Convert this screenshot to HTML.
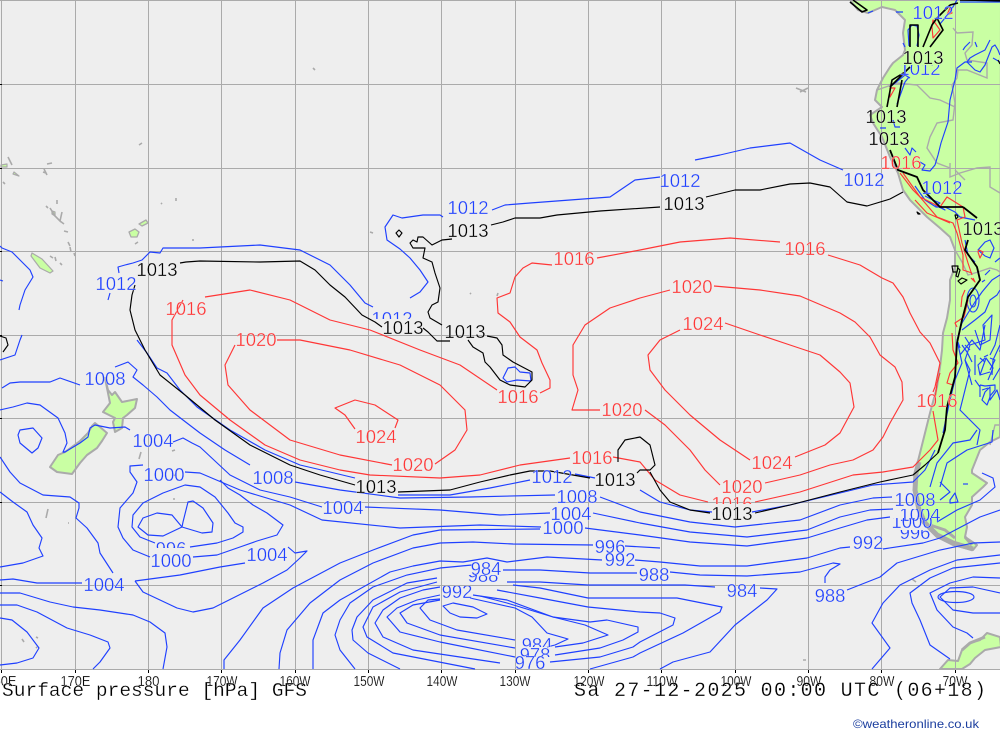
<!DOCTYPE html>
<html><head><meta charset="utf-8"><title>Surface pressure</title>
<style>
html,body{margin:0;padding:0;background:#fff;width:1000px;height:733px;overflow:hidden}
svg{display:block}
text{font-family:"Liberation Sans",sans-serif}
.l text{font-size:18.5px;text-anchor:middle;stroke:#eeeeee;stroke-width:.3;paint-order:normal}
.b polyline,.b path{stroke:#1f40ff}
.r polyline,.r path{stroke:#ff3636}
.k polyline,.k path{stroke:#000}
.c polyline,.c path{fill:none;stroke-width:1.15;stroke-linejoin:round}
.a text{font-size:15px;text-anchor:middle;fill:#000;stroke:#fff;stroke-width:.2}
</style></head><body>
<svg width="1000" height="733" viewBox="0 0 1000 733" xmlns="http://www.w3.org/2000/svg">
<defs>
<clipPath id="c1"><rect x="370" y="300" width="50" height="19"/></clipPath>
<clipPath id="c2"><rect x="700" y="490" width="70" height="14"/></clipPath>
<clipPath id="c3"><rect x="150" y="535" width="45" height="13"/></clipPath>
<clipPath id="c4"><rect x="895" y="509" width="50" height="13"/></clipPath>
<clipPath id="c5"><rect x="885" y="518" width="50" height="11"/></clipPath>
<clipPath id="c6"><rect x="890" y="530" width="50" height="11"/></clipPath>
<clipPath id="c7"><rect x="895" y="65" width="50" height="12"/></clipPath>
<clipPath id="c8"><rect x="510" y="630" width="60" height="17"/></clipPath>
<clipPath id="c9"><rect x="510" y="648" width="60" height="9"/></clipPath>
<clipPath id="c10"><rect x="460" y="575" width="50" height="8"/></clipPath>
<clipPath id="c11"><rect x="430" y="586" width="60" height="14"/></clipPath>
</defs>
<rect x="0" y="0" width="1000" height="669" fill="#eeeeee"/>

<!-- land -->
<g fill="#c9ffa3" stroke="#aaaaaa" stroke-width="2" stroke-linejoin="round">
<path d="M850 0L858 10 868 13 882 7 895 10 902 17 905 20 903 33 905 50 903 55 893 63 890 67 883 78 877 90 875 100 882 107 870 115 873 123 882 137 890 157 898 173 903 190 910 200 927 217 940 228 950 237 955 250 955 267 950 280 950 300 947 318 943 333 942 350 940 367 937 387 930 413 925 433 920 453 915 473 915 490 918 510 923 523 937 537 953 545 973 550 977 545 965 537 967 527 965 517 972 505 972 497 983 487 987 483 972 473 972 470 980 450 990 442 1000 437 1001 0Z"/>
<path d="M940 669L948 660 958 661 962 650 970 643 980 640 987 633 1000 637 1001 647 985 650 975 658 970 664 962 669Z"/>
<path d="M105 378L108 390 112 395 115 392 122 402 137 399 135 408 127 415 123 418 122 428 115 432 113 422 115 418 103 412 110 403 108 393Z"/>
<path d="M95 423L92 426 88 433 80 441 65 452 58 455 50 467 57 472 72 474 80 463 87 455 97 448 102 441 107 433 100 427Z"/>
<path d="M32 253L42 259 53 271 50 273 40 268 31 256Z" stroke-width="1.2"/>
<path d="M129 232L135 229 139 232 137 237 131 237Z" stroke-width="1.3"/>
<path d="M139 224L146 220 148 223 142 226Z" stroke-width="1.3"/>
<path d="M52 211L55 212 55 216 52 214Z" stroke-width="1.2"/>
<path d="M1 165L7 164 7 167 1 167Z" stroke-width="1.2"/>
<path d="M14 172L19 176 13 174Z" stroke-width="1.2"/>
</g>
<!-- small specks -->
<g fill="none" stroke="#aaaaaa" stroke-width="1.6">
<path d="M8 157L12 165M44 169L47 175M46 206L48 208M57 200L57 204M50 208L55 216 60 221 62 212M60 221L64 224M68 232L64 231M68 242L70 246M70 247L71 252M74 253L75 256M50 256L53 258M55 257L56 261M60 263L62 265M135 244L138 242M46 173L43 172M3 182L5 184M52 163L47 164M142 143L139 145M161 203L162 204M176 198L176 201M193 239L193 241M313 68L315 70M796 88L806 92M800 92L808 88M912 579L916 582M803 660L806 660M174 475L176 476M46 518L48 509M68 523L69 523M36 637L38 638M22 639L24 642M36 647L37 648M139 459L141 452 M173 499L175 499M470 293L471 294M498 293L497 296M373 233L370 232M175 450L172 451"/>
</g>
<!-- heavy southern coast -->
<g fill="none" stroke="#aaaaaa" stroke-linejoin="round">
<path d="M919 462L916 473 915 490 919 510 925 523 937 535 953 543 973 549" stroke-width="5"/>
<path d="M930 525L945 530 955 538M965 537L972 545" stroke-width="3"/>
<path d="M962 650L970 643 985 637" stroke-width="3"/>
</g>
<!-- borders -->
<g fill="none" stroke="#aaaaaa" stroke-width="1.4">
<path d="M953 28L957 33 973 32 972 45 965 53 967 60 987 63 987 78 967 70 958 70 957 78 952 85 955 103 953 120 937 123 930 137 927 148 937 163 950 168M950 163L950 177 960 173 977 168 990 167 990 187 1000 193"/>
<path d="M877 90L897 83 917 85 930 98 940 100 955 107"/>
<path d="M955 250L962 262 968 275 978 272 990 268 997 270 1000 272"/>
<path d="M990 445L995 425 1000 425M955 170L965 180"/>
</g>

<!-- grid -->
<g stroke="#aaaaaa" stroke-width="1" fill="none">
<path d="M0 .5H1000M0 84.5H1000M0 168.5H1000M0 251.5H1000M0 335.5H1000M0 418.5H1000M0 502.5H1000M0 585.5H1000M0 669.5H1000"/>
<path d="M1.5 0V669M75.5 0V669M148.5 0V669M221.5 0V669M295.5 0V669M368.5 0V669M441.5 0V669M515.5 0V669M588.5 0V669M661.5 0V669M735.5 0V669M808.5 0V669M881.5 0V669M955.5 0V669"/>
</g>
<g stroke="#000" stroke-width="1" fill="none">
<path d="M1.5 670V673M75.5 670V673M148.5 670V673M221.5 670V673M295.5 670V673M368.5 670V673M441.5 670V673M515.5 670V673M588.5 670V673M661.5 670V673M735.5 670V673M808.5 670V673M881.5 670V673M955.5 670V673M0 84.5H2M0 168.5H2M0 251.5H2M0 335.5H2M0 418.5H2M0 502.5H2M0 585.5H2"/>
</g>

<!-- blue contours -->
<g class="c b">
<path d="M119 273L118 267 125 265 133 263 142 260 150 252 160 253 163 248 200 248 260 245 300 250 330 265 350 285 365 303 373 307"/>
<path d="M410 298L420 292 428 282 420 270 410 258 400 249 387 240 385 227 393 215 402 218 423 215 440 215 443 217"/>
<path d="M492 210L505 205 530 203 570 200 610 197 635 180 660 177"/>
<path d="M695 160L720 155 750 148 790 143 820 160 843 170"/>
<path d="M110 293L108 300"/>
<path d="M137 340L147 353 157 368 167 373 180 390 197 407 230 430 265 450 300 465 330 472 355 478"/>
<path d="M398 495L450 495 490 488 530 480"/>
<path d="M575 474L595 478"/>
<path d="M640 490L660 502 690 510 712 512M752 512L790 505 840 493 873 485 913 482 925 470 935 450"/>
<path d="M2 388L10 383 20 382 33 382 50 382 60 378 80 385"/>
<path d="M115 367L128 362 137 370 133 377 143 385 157 397 170 410 183 420 200 433 225 450 250 465"/>
<path d="M295 482L340 490 400 498 470 497 555 495"/>
<path d="M600 497L640 512 690 522 735 527 800 520 840 505 873 498 892 497"/>
<path d="M130 430L125 427 110 428 95 425 90 428 88 437 80 443 65 452 63 452"/>
<path d="M173 442L183 438 192 443 200 447 230 475 260 490 290 497 322 507"/>
<path d="M365 507L440 510 500 515 550 513"/>
<path d="M593 513L640 523 690 532 747 537 807 530 840 517 870 510 893 509"/>
<path d="M185 472L200 473 240 490 290 505 322 520 400 528 480 525 541 527"/>
<path d="M585 528L640 535 690 542 747 546 807 538 840 528 867 520 890 517"/>
<path d="M150 557L133 550 123 538 118 527 120 508 133 493 137 482 130 472 130 466 143 465"/>
<path d="M193 557L217 555 240 547 257 541 277 535 283 525 267 513 253 505 240 495 228 488 220 480"/>
<path d="M155 543L140 537 132 527 133 515 143 503 163 493 185 485 200 487 215 497 228 513 235 523 243 527 243 532 233 538 217 543 190 547"/>
<path d="M182 527L172 515 157 513 143 518 138 527 148 535 163 536Z"/>
<path d="M182 527L183 522 188 502 193 501 203 508 213 523 212 532 202 533Z"/>
<path d="M0 492L13 502 27 512 33 525 42 538 39 548 43 556 23 563 0 567"/>
<path d="M0 457L10 472 20 483 43 495 70 497 79 503 79 508 76 518 87 528 98 543 100 553 113 573"/>
<path d="M0 580L13 579 37 583 82 583"/>
<path d="M135 581L180 575 220 567 245 563"/>
<path d="M288 547L295 553 307 551 300 558 287 570 263 583 233 598 213 608 193 612 177 608 160 600 143 592 135 581"/>
<path d="M0 593L20 593 50 602 73 607 100 610 133 615 150 622 165 633 167 647 163 669"/>
<path d="M0 605L17 605 37 612 67 628 90 635 108 642 110 648 100 662 93 669"/>
<path d="M0 618L12 620 27 632 39 648 33 658 17 663 0 665"/>
<path d="M224 669L224 660 240 640 263 608 293 588 340 563 373 550 413 535 440 530 540 529"/>
<path d="M279 669L280 653 287 630 310 603 340 580 373 563 413 548 440 543 473 542 513 544 593 545"/>
<path d="M313 669L313 640 323 613 340 600 390 572 413 566 440 561 463 562 487 558 507 562 547 557 602 560"/>
<path d="M355 669L340 650 335 635 340 620 350 603 373 587 407 575 440 568 472 565"/>
<path d="M503 570L540 570 590 573 637 573"/>
<path d="M400 669L368 653 353 640 352 630 357 617 373 600 407 583 437 578"/>
<path d="M475 669L393 653 367 637 363 627 373 607 400 592 437 582"/>
<path d="M500 663L413 650 383 637 375 623 383 610 400 598 423 590 440 587"/>
<path d="M515 657L440 642 400 632 387 617 397 608 417 600 440 595"/>
<path d="M515 648L440 635 407 623 400 613 413 605 440 600"/>
<path d="M515 640L457 630 430 620 420 608 428 600 440 599"/>
<path d="M443 606L453 603 473 607 487 614 477 618 460 617 450 613Z"/>
<path d="M507 582L540 582 588 585 640 585 685 585 715 587"/>
<path d="M760 588L777 589 767 600 735 625 710 652 673 662 660 669"/>
<path d="M513 585L540 588 588 598 640 598 677 598 722 607 720 612 683 633 640 653 633 657 590 669"/>
<path d="M497 590L540 598 588 607 640 612 660 613 675 618 673 625 640 642 633 647 600 657 550 662"/>
<path d="M480 596L507 603 553 617 590 622 607 620 638 627 638 632 623 640 600 648 555 655"/>
<path d="M470 598L515 608 532 617 547 633 568 639 555 645 547 647"/>
<path d="M473 595L507 600 553 617 585 625 608 635 583 643 555 647"/>
<path d="M625 546L660 548M635 560L660 562 700 566 747 566 807 558 840 548 850 547"/>
<path d="M670 572L700 575 747 576 800 572 833 563 840 564 830 570 825 577 825 583"/>
<path d="M847 590L880 577 897 563 940 550 973 543 1000 542"/>
<path d="M883 549L923 543 940 538 980 517 1000 510"/>
<path d="M872 669L890 648 872 623 883 603 900 585 930 570 957 560 1000 555"/>
<path d="M950 659L930 645 920 620 912 603 910 593 930 578 953 568 1000 563"/>
<path d="M973 638L967 633 953 627 937 610 930 593 950 583 973 577 1000 578"/>
<path d="M1000 613L973 613 953 610 940 597 950 588 973 587 1000 593"/>
<ellipse cx="956" cy="597" rx="18" ry="5.5" fill="none" stroke="#1f40ff" stroke-width="1.15"/>
<path d="M20 430L33 428 42 438 38 448 32 453 20 443 18 435Z"/>
<path d="M0 410L13 407 27 403 40 405 58 418 65 433 67 443 63 452 65 452"/>
<path d="M0 246L2 248 12 252 20 260 30 270 33 277 25 290 20 305 19 310M0 280L3 281"/>
<path d="M0 360L15 355 20 340 22 335"/>
<path d="M503 378L508 368 515 367 520 372 530 373 531 381 517 380 507 382Z"/>
<!-- Andes & interior -->
<path d="M909 46L908 30 912 25 917 26 919 35 917 46M903 43L905 47"/>
<path d="M940 24L950 12 957 0M960 2L1000 2M903 12L896 12M868 13L873 11"/>
<path d="M893 120L895 127 900 127M880 128L886 128"/>
<path d="M890 87L905 75 910 78M897 104L905 82 909 77"/>
<path d="M905 148L910 155 912 148 916 152"/>
<path d="M920 162L925 165 922 170 930 171 935 165 938 155 941 143 948 122 950 100 955 80 957 68 965 62 972 62"/>
<path d="M970 42L965 47 963 50M975 42L977 47"/>
<path d="M990 40L985 50 975 55 970 58 967 62 975 70 980 72 985 65 992 47 995 45 998 50 1000 55M993 58L1000 62"/>
<path d="M915 186L925 200 936 207 945 207 955 212 960 217 975 220"/>
<path d="M925 196L933 200 940 203 937 205 945 210 935 205"/>
<path d="M965 240L968 255 975 262M985 242L990 240 994 248 990 258 985 256 978 250Z"/>
<path d="M1000 258L995 262M985 275L990 270M982 282L985 280"/>
<path d="M943 433L950 400 955 380 962 363 957 340 962 323 968 313 975 302 982 292 992 280 1000 275"/>
<ellipse cx="973" cy="300" rx="6" ry="12" fill="none" stroke="#1f40ff" stroke-width="1.1"/>
<ellipse cx="973" cy="301" rx="3" ry="6" fill="none" stroke="#1f40ff" stroke-width="1.1"/>
<path d="M962 330L975 320 985 312 990 300 997 295 1000 290M970 345L985 340 983 325 992 315 990 340 980 345 975 330"/>
<path d="M960 355L972 340 980 350 985 325M962 345L967 352 972 362"/>
<path d="M965 337L970 345 965 360 970 370 965 390 960 410 980 430 977 445"/>
<path d="M1000 325L995 345 990 355M980 375L986 358 993 368 988 380M965 360L972 385"/>
<path d="M975 355L975 375M965 345L970 350"/>
<path d="M985 358L978 365 980 375 990 372M1000 345L993 360 992 375"/>
<path d="M980 358L985 362"/>
<path d="M984 357L988 355M1000 350L1000 352M958 342L960 348"/>
<path d="M990 387L985 392 982 400 987 405 990 397Z"/>
<path d="M980 385L980 397M982 390L988 388M980 387L975 380"/>
<path d="M980 385L985 386 995 385 995 390 990 396 990 400 997 390 1000 400"/>
<path d="M1000 368L993 380M990 358L995 360 990 370"/>
<path d="M993 430L992 442 967 450 947 463 940 487M977 430L970 440 953 443 937 463 930 487"/>
<path d="M982 473L993 478 995 487 980 500 957 510 937 522M940 482L950 492 940 500"/>
<path d="M950 500L955 493 958 502 950 503Z"/>
<path d="M963 484L968 484"/>
</g>

<!-- red -->
<g class="c r">
<path d="M183 300L172 320 172 345 185 375 200 395 230 420 265 445 300 460 340 470 370 475 440 478 480 475 520 465 570 458"/>
<path d="M205 297L250 290 290 300 330 320 370 330 420 350 460 365 497 390"/>
<path d="M540 393L550 388 550 380 542 363 537 350 520 337 510 322 498 313 497 298 510 293 515 277 523 268 532 263 552 265"/>
<path d="M597 258L640 250 680 242 730 238 780 242"/>
<path d="M828 255L860 265 882 278 893 283 903 297 910 313 920 332 930 343 940 363 935 387 933 392"/>
<path d="M613 457L640 462 655 480 680 495 708 502M755 502L800 492 853 475 883 472 913 467 930 450 938 440 933 411"/>
<path d="M670 290L640 298 610 308 585 325 573 345 573 375 578 390 572 410 600 410"/>
<path d="M645 410L665 425 690 450 705 470 720 485"/>
<path d="M765 483L800 475 830 465 853 460 873 450 883 437 890 423 903 400 902 382 895 367 880 355 870 337 855 322 840 313 800 296 760 290 714 286"/>
<path d="M680 330L660 340 648 355 650 370 665 390 690 415 720 440 750 460"/>
<path d="M795 457L825 445 840 433 854 407 850 383 840 372 820 355 790 345 760 335 725 323"/>
<path d="M235 345L225 365 228 385 250 410 290 440 340 455 392 465"/>
<path d="M435 464L455 450 467 430 465 410 440 385 400 365 350 350 300 340 277 340"/>
<path d="M355 429L345 415 335 408 355 400 375 405 398 420 395 428"/>
<!-- andes red -->
<path d="M900 173L913 190 920 197 937 217 953 223 957 233 963 255 963 270 972 273"/>
<path d="M903 173L920 197 940 207 947 197 963 207 965 217 957 220 962 243 968 263 972 275"/>
<path d="M915 200L927 213 950 223"/>
<path d="M973 278L975 282 971 278M965 290L962 297 961 307M968 300L964 317 955 323 957 327"/>
<path d="M952 333L953 350 958 363 950 373 947 383 953 385M940 373L937 383 935 400"/>
<path d="M933 20L940 30 933 38 932 27Z"/>
<path d="M950 8L947 15 952 13Z"/>
<path d="M890 88L895 88 890 97Z"/>
<path d="M979 250L983 252 980 258 978 252Z"/>
</g>

<!-- black -->
<g class="c k">
<path d="M180 263L186 262 200 261 260 262 300 261 315 270 330 285 345 297 362 315 375 322 382 327"/>
<path d="M423 328L428 332 437 341 450 341"/>
<path d="M442 325L430 318 428 312 432 305 438 302 440 288 435 273 432 262 423 258 425 248 413 248 410 243 413 240 417 242 418 237 423 237 432 245 442 240 452 239"/>
<path d="M491 225L503 222 515 218 540 218 557 215 600 211 660 207"/>
<path d="M706 197L735 190 760 190 790 184 810 183 830 187 847 202 867 206 890 199 903 192"/>
<path d="M487 336L497 338 502 345 503 355 513 362 532 372 532 380 525 387 510 385 500 380 490 367 485 362 483 353 473 347 468 340"/>
<path d="M396 233L399 230 402 233 399 237Z"/>
<path d="M135 285L132 295 130 310 135 330 145 350 160 375 185 395 215 420 250 445 290 465 320 475 355 485"/>
<path d="M398 492L450 490 480 482 510 475 530 471 550 471 590 478"/>
<path d="M637 473L640 470 650 470 655 465 650 445 640 437 625 440 618 450 618 462"/>
<path d="M650 472L660 490 670 502 690 510 710 513"/>
<path d="M755 513L790 505 840 492 880 482 913 475 925 465 938 453" />
<path d="M938 453L945 430 947 407 955 377 957 343 962 320 968 297 980 280 977 267 965 250 968 240" style="stroke-width:1.8"/>
<path d="M963 207L940 207 923 190 917 177 898 170 890 150" style="stroke-width:1.8"/>
<path d="M977 218L963 207" style="stroke-width:1.8"/>
<path d="M952 266L958 266 957 272 953 272ZM967 280L962 278 958 281 961 284Z"/>
<path d="M958 268L956 276 958 277 960 270Z"/>
<path d="M957 215L958 217 956 219 955 215ZM917 212L920 214 918 214Z"/>
<path d="M910 47L910 25 918 25 918 47" style="stroke-width:1.6"/>
<path d="M923 47L932 25 937 18 950 5" style="stroke-width:1.6"/>
<path d="M930 47L943 30 937 18M958 3L950 5M960 0L1000 0" style="stroke-width:1.6"/>
<path d="M890 87L910 67M887 107L892 80 905 72M897 107L902 80" style="stroke-width:1.6"/>
<path d="M850 2L862 12 867 10 853 0" style="stroke-width:1.6"/>
<path d="M960 0L1000 1M998 60L1000 64"/>
<path d="M0 336L6 338 8 345 3 352"/>
</g>

<!-- labels -->
<g class="l" fill="#1f40ff">
<text x="468" y="214">1012</text><text x="680" y="187">1012</text><text x="864" y="186">1012</text>
<text x="942" y="194">1012</text><text x="116" y="290">1012</text><text x="552" y="483">1012</text>
<text x="933" y="19">1012</text>
<text x="392" y="325" clip-path="url(#c1)">1012</text>
<text x="920" y="75" clip-path="url(#c7)">1012</text>
<text x="105" y="385">1008</text><text x="273" y="484">1008</text><text x="577" y="503">1008</text><text x="915" y="506">1008</text>
<text x="153" y="447">1004</text><text x="343" y="514">1004</text><text x="267" y="561">1004</text><text x="104" y="591">1004</text><text x="571" y="520">1004</text>
<text x="920" y="521" clip-path="url(#c4)">1004</text>
<text x="164" y="481">1000</text><text x="171" y="567">1000</text><text x="563" y="534">1000</text>
<text x="912" y="528" clip-path="url(#c5)">1000</text>
<text x="171" y="555" clip-path="url(#c3)">996</text><text x="610" y="553">996</text>
<text x="915" y="539" clip-path="url(#c6)">996</text>
<text x="620" y="566">992</text><text x="868" y="549">992</text>
<text x="654" y="581">988</text><text x="830" y="602">988</text>
<text x="486" y="575">984</text><text x="742" y="597">984</text>
<text x="483" y="582" clip-path="url(#c10)">988</text>
<text x="457" y="598" clip-path="url(#c11)">992</text>
<text x="537" y="651" clip-path="url(#c8)">984</text>
<text x="535" y="661" clip-path="url(#c9)">978</text>
<text x="530" y="669">976</text>
</g>
<g class="l" fill="#ff3636">
<text x="186" y="315">1016</text><text x="518" y="403">1016</text><text x="574" y="265">1016</text><text x="805" y="255">1016</text>
<text x="592" y="464">1016</text><text x="901" y="169">1016</text><text x="937" y="407">1016</text>
<text x="732" y="510" clip-path="url(#c2)">1016</text>
<text x="256" y="346">1020</text><text x="413" y="471">1020</text><text x="692" y="293">1020</text><text x="622" y="416">1020</text><text x="742" y="493">1020</text>
<text x="376" y="443">1024</text><text x="703" y="330">1024</text><text x="772" y="469">1024</text>
</g>
<g class="l" fill="#000">
<text x="157" y="276">1013</text><text x="403" y="334">1013</text><text x="465" y="338">1013</text><text x="468" y="237">1013</text>
<text x="684" y="210">1013</text><text x="376" y="493">1013</text><text x="615" y="486">1013</text><text x="732" y="520">1013</text>
<text x="923" y="64">1013</text><text x="886" y="123">1013</text><text x="889" y="145">1013</text><text x="983" y="235">1013</text>
</g>

<!-- axis labels -->
<g class="a">
<text x="1.5" y="686" textLength="30" lengthAdjust="spacingAndGlyphs">160E</text>
<text x="75.5" y="686" textLength="30" lengthAdjust="spacingAndGlyphs">170E</text>
<text x="148.5" y="686" textLength="22" lengthAdjust="spacingAndGlyphs">180</text>
<text x="222" y="686" textLength="31" lengthAdjust="spacingAndGlyphs">170W</text>
<text x="295" y="686" textLength="31" lengthAdjust="spacingAndGlyphs">160W</text>
<text x="369" y="686" textLength="31" lengthAdjust="spacingAndGlyphs">150W</text>
<text x="442" y="686" textLength="31" lengthAdjust="spacingAndGlyphs">140W</text>
<text x="515" y="686" textLength="31" lengthAdjust="spacingAndGlyphs">130W</text>
<text x="589" y="686" textLength="31" lengthAdjust="spacingAndGlyphs">120W</text>
<text x="662" y="686" textLength="31" lengthAdjust="spacingAndGlyphs">110W</text>
<text x="736" y="686" textLength="31" lengthAdjust="spacingAndGlyphs">100W</text>
<text x="809" y="686" textLength="25" lengthAdjust="spacingAndGlyphs">90W</text>
<text x="882" y="686" textLength="25" lengthAdjust="spacingAndGlyphs">80W</text>
<text x="955" y="686" textLength="25" lengthAdjust="spacingAndGlyphs">70W</text>
</g>
<text x="2" y="696" font-size="19.5" textLength="305" lengthAdjust="spacing" style="font-family:'Liberation Mono',monospace" fill="#000" stroke="#fff" stroke-width=".25">Surface pressure [hPa] GFS</text>
<text x="574" y="696" font-size="20" textLength="412" lengthAdjust="spacing" style="font-family:'Liberation Mono',monospace" fill="#000" stroke="#fff" stroke-width=".25">Sa 27-12-2025 00:00 UTC (06+18)</text>
<text x="853" y="728" font-size="12" textLength="126" lengthAdjust="spacingAndGlyphs" fill="#1a3d9e">©weatheronline.co.uk</text>
</svg>
</body></html>
